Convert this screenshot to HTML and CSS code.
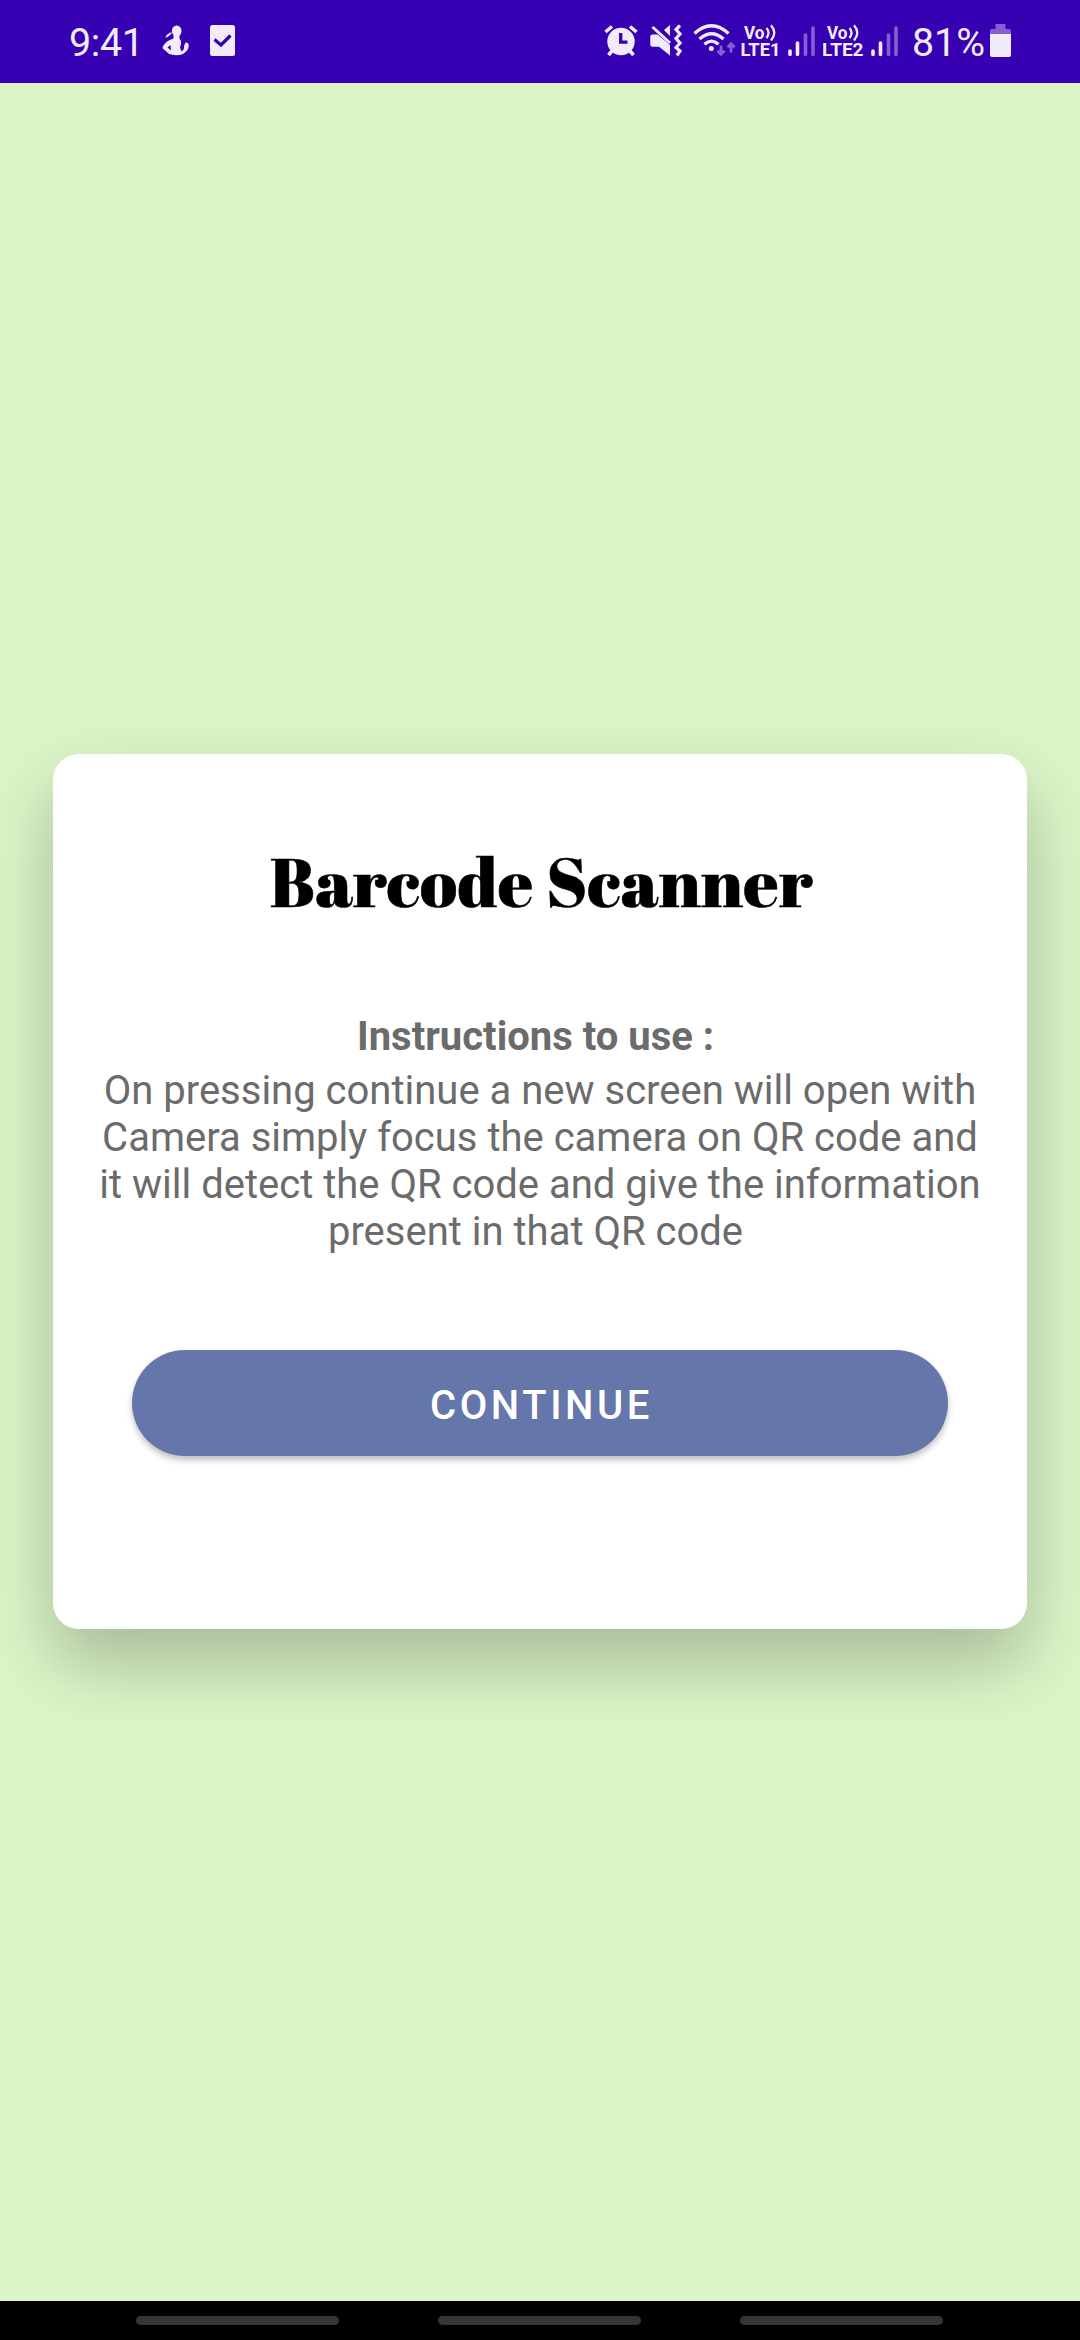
FILE: index.html
```html
<!DOCTYPE html>
<html lang="en">
<head>
<meta charset="utf-8">
<title>Barcode Scanner</title>
<link rel="stylesheet" href="styles.css">
</head>
<body>
<div class="screen">
  <header class="status">
    <div class="status-left">
      <svg class="clock" width="76" height="83" viewBox="69 0 76 83"><text x="69" y="56" font-size="39.500" textLength="75">9:41</text></svg>
      <svg class="person" width="28" height="83" viewBox="162 0 28 83">
        <ellipse cx="176.700" cy="31" rx="4.800" ry="5.600"/>
        <path d="M172 32Q170 36.500 165.300 37.800Q166.500 33.500 172 32Z"/>
        <path fill-rule="evenodd" d="M173.500 35H179.500V38.500L181 41Q181.500 44 180 47.500L181.500 51.500Q184.500 49.500 184 46L185.500 42.500L188 43L188.800 46Q188 51.500 182 54.500Q175 56 169 54Q167 52 162.800 48.500Q162 47 163.500 45.500Q166.500 40.500 173.500 38.500ZM170.500 45L167.500 47.500L171 50.500Z"/>
      </svg>
      <svg class="check" width="25" height="83" viewBox="210 0 25 83">
        <rect x="210" y="25" width="25" height="31" rx="2.500"/>
        <path class="cut" d="M214.500 39.500L221 45L230.500 35.500" stroke-width="3.200"/>
      </svg>
    </div>
    <div class="status-right">
      <svg class="alarm" width="34" height="83" viewBox="604 0 34 83">
        <circle cx="621" cy="41.500" r="13.700"/>
        <path class="line" d="M605.500 32L612 26.500M630 26.500L636.500 32M612 51L608.500 55M630 51L633.500 55" stroke-width="3.600"/>
        <path class="cut" d="M620.700 33V42.200H627.500" stroke-width="3.300"/>
      </svg>
      <svg class="mute" width="34" height="83" viewBox="650 0 34 83">
        <path d="M650.300 36.500Q650.300 34.500 652.300 34.500H657.500L670 45V55.500L659 46.800H652.300Q650.300 46.800 650.300 44.800ZM670 25V36L664 30Z"/>
        <path class="line" d="M652.500 27L670 43" stroke-width="3"/>
        <path class="line" d="M680 25.500L676 29.500L680 34L676 38.500L680 43L676 47.500L680 51L677 55.500" stroke-width="3.200"/>
      </svg>
      <svg class="wifi" width="43" height="83" viewBox="693 0 43 83">
        <path class="line" d="M694.500 33.500Q711.500 18 728.500 33.500M699.500 39Q711.500 28.500 723.500 39M704.500 44.200Q711.500 38 718.500 44.200" stroke-width="3.300"/>
        <circle cx="711.300" cy="48.500" r="2.500"/>
        <path class="line dim" d="M721 45.500V54M717.500 50.800L721 54.300L724.500 50.800M731 52.500V44M727.500 47.200L731 43.700L734.500 47.200" stroke-width="2.700"/>
      </svg>
      <svg class="volte" width="40" height="83" viewBox="741 0 40 83">
        <g class="bold"><text x="744" y="38.500" font-size="18" textLength="20.500" lengthAdjust="spacingAndGlyphs">Vo</text><text x="740.500" y="56" font-size="18.500" textLength="40" lengthAdjust="spacingAndGlyphs">LTE1</text></g>
        <path class="line" d="M766.500 28Q770.500 32.500 766.500 38M771 25.200Q777.500 32.500 771 40.500" stroke-width="2.200"/>
      </svg>
      <svg class="signal" width="28" height="83" viewBox="788 0 28 83">
        <path class="line" d="M790 51V54.500M797.500 43V54.500" stroke-width="3.600"/>
        <path class="line dim" d="M805.500 35V54.500M813 28V54.500" stroke-width="3.600"/>
      </svg>
      <svg class="volte" width="41" height="83" viewBox="823 0 41 83">
        <g class="bold"><text x="827" y="38.500" font-size="18" textLength="20.500" lengthAdjust="spacingAndGlyphs">Vo</text><text x="822" y="56" font-size="18.500" textLength="41.500" lengthAdjust="spacingAndGlyphs">LTE2</text></g>
        <path class="line" d="M849.500 28Q853.500 32.500 849.500 38M854 25.200Q860.500 32.500 854 40.500" stroke-width="2.200"/>
      </svg>
      <svg class="signal" width="28" height="83" viewBox="871 0 28 83">
        <path class="line" d="M873 51V54.500M880.500 43V54.500" stroke-width="3.600"/>
        <path class="line dim" d="M888.500 35V54.500M896 28V54.500" stroke-width="3.600"/>
      </svg>
      <svg class="percent" width="74" height="83" viewBox="912 0 74 83"><text x="912" y="56" font-size="39.500" textLength="73" lengthAdjust="spacingAndGlyphs">81%</text></svg>
      <svg class="battery" width="21" height="83" viewBox="990 0 21 83">
        <path class="faded" d="M995.500 24H1005.500V29H1009Q1011 29 1011 31V34H990V31Q990 29 992 29H995.500Z"/>
        <path d="M990 34H1011V55Q1011 57 1009 57H992Q990 57 990 55Z"/>
      </svg>
    </div>
  </header>
  <main class="content">
    <section class="card">
      <h1 class="title">Barcode Scanner</h1>
      <h2 class="subtitle">Instructions to use :</h2>
      <p class="text">On pressing continue a new screen will open with<br>Camera simply focus the camera on QR code and<br>it will detect the QR code and give the information<br><span class="last-line">present in that QR code</span></p>
      <button class="continue" type="button">CONTINUE</button>
    </section>
  </main>
  <nav class="nav"><span class="pill"></span><span class="pill"></span><span class="pill"></span></nav>
</div>
</body>
</html>
```
FILE: styles.css
```css
* { box-sizing: border-box; }
body { margin: 0; font-family: Roboto, sans-serif; }
.screen { width: 1080px; height: 2340px; display: flex; flex-direction: column; background: #dbf5c8; }
.status { height: 83px; flex: none; display: flex; justify-content: space-between; padding: 0 69px; background: #3700b3; }
.status-left, .status-right { display: flex; }
.status svg { display: block; flex: none; fill: #f2ebfc; }
.status .line { fill: none; stroke: #f2ebfc; }
.status .cut { fill: none; stroke: #3700b3; }
.status .line.dim { stroke: #875fd3; }
.status .faded { fill: #875fd3; }
.signal .line { stroke-linecap: round; }
.bold { font-weight: 700; }
.person { margin-left: 17px; }
.check { margin-left: 20px; }
.mute { margin-left: 12px; }
.wifi { margin-left: 9px; }
.volte { margin-left: 5px; }
.signal { margin-left: 7px; }
.signal + .volte { margin-left: 7px; }
.percent { margin-left: 13px; }
.battery { margin-left: 4px; }
.content { flex: 1; padding: 671px 53px 0; }
.card { height: 875px; display: flex; flex-direction: column; align-items: center; padding-top: 85px; border-radius: 26px; background: #fff; box-shadow: 0 34px 70px rgba(0, 0, 0, .245); }
.title { margin: 0; padding-left: 3px; height: 84px; font: 400 68.25px/84px "Abril Fatface", "Liberation Serif", serif; letter-spacing: .35px; color: #000; white-space: nowrap; -webkit-text-stroke: .6px #000; }
.subtitle { margin: 90px 0 0; padding-right: 9px; font-size: 40px; line-height: 47px; font-weight: 700; color: #6b6b6b; white-space: nowrap; }
.text { margin: 7px 0 0; font-size: 40px; line-height: 47px; text-align: center; color: #6b6b6b; white-space: nowrap; }
.last-line { padding-right: 9px; }
.continue { width: 816px; height: 106px; margin: 95px 0 0; padding: 5px 0 0 3px; border: 0; border-radius: 53px; background: #6576aa; color: #fff; font: 500 40px/47px Roboto, sans-serif; letter-spacing: 3.57px; box-shadow: 0 4px 6px rgba(0, 0, 0, .25); }
.nav { height: 39px; flex: none; display: flex; gap: 99px; padding: 15px 0 0 136px; background: #000; }
.pill { width: 203px; height: 9px; border-radius: 5px; background: #353535; }
```
